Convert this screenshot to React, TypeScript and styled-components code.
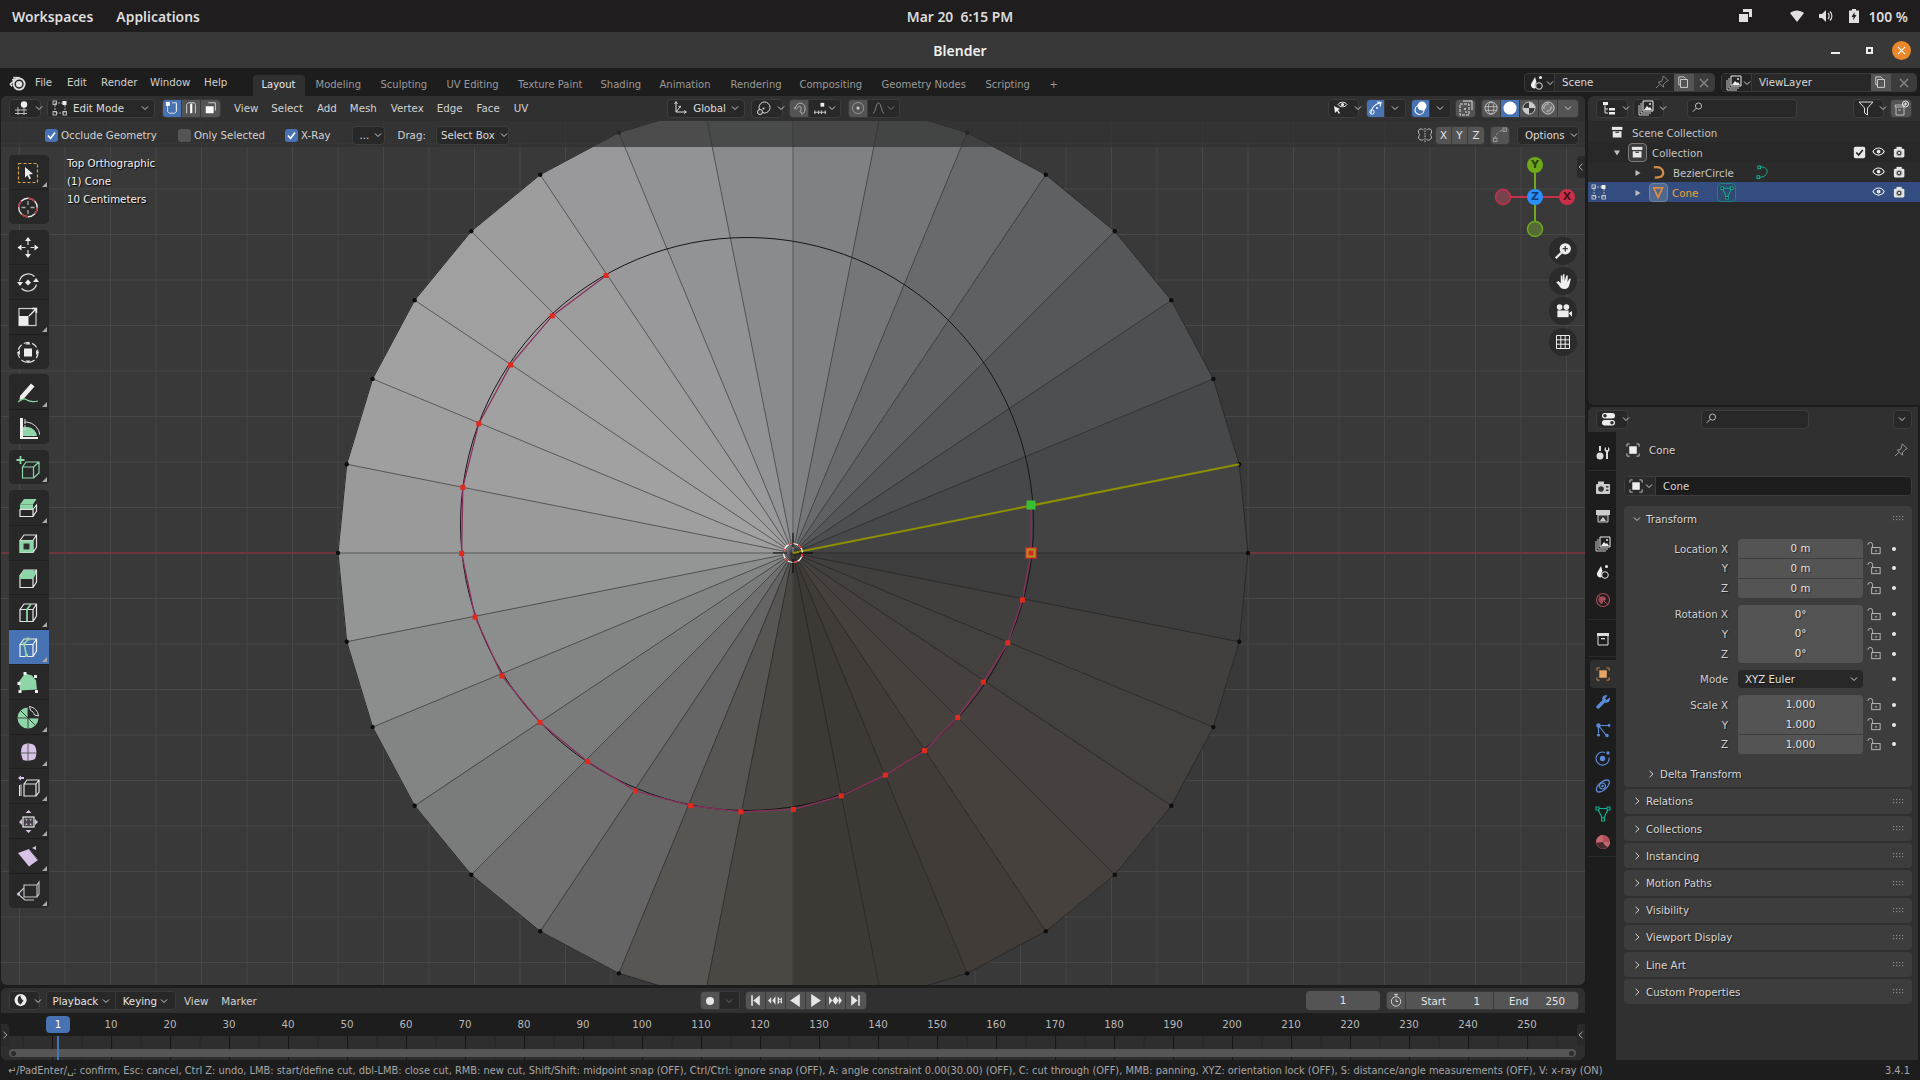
import React from "react";
import styled, { createGlobalStyle } from "styled-components";

const GlobalStyle = createGlobalStyle`
  html, body { margin: 0; padding: 0; background: #1d1d1d; }
  * { box-sizing: border-box; }
  svg { display: block; flex-shrink: 0; }
`;

const UI = `"DejaVu Sans", "Liberation Sans", sans-serif`;
const DESK = `"Noto Sans", "Open Sans", sans-serif`;

/* ---------- shell ---------- */

const Page = styled.div`
  width: 1920px;
  height: 1080px;
  overflow: hidden;
  display: flex;
  flex-direction: column;
  background: #1d1d1d;
  font-family: ${UI};
  font-size: 10.25px;
  color: #d4d4d4;
`;

const DeskBar = styled.div`
  height: 32px;
  background: #1f1d1e;
  display: grid;
  grid-template-columns: 1fr auto 1fr;
  align-items: center;
  padding: 0 12px;
  font-family: ${DESK};
  font-weight: 600;
  font-size: 13.9px;
  color: #dcdcdc;
`;

const DeskLeft = styled.div`
  display: flex;
  gap: 23px;
`;

const DeskRight = styled.div`
  display: flex;
  justify-content: flex-end;
  align-items: center;
`;

const Clock = styled.div`
  white-space: pre;
`;

const TitleBar = styled.div`
  height: 36px;
  background: #383838;
  display: flex;
  align-items: center;
  justify-content: center;
  position: relative;
  font-family: ${DESK};
  font-weight: 600;
  font-size: 14px;
  color: #f0f0f0;
`;

const WindowControls = styled.div`
  position: absolute;
  right: 9px;
  top: 8px;
  display: flex;
  align-items: center;
  height: 20px;
`;

const MinBtn = styled.div`
  width: 9px;
  height: 2px;
  background: #eee;
  margin: 5px 26px 0 0;
`;

const MaxBtn = styled.div`
  width: 7px;
  height: 7px;
  border: 2px solid #eee;
  background: #383838;
  margin-right: 19px;
`;

const CloseBtn = styled.div`
  width: 19px;
  height: 19px;
  border-radius: 50%;
  background: #e9872b;
  display: flex;
  align-items: center;
  justify-content: center;
`;

const TopMenu = styled.div`
  height: 28px;
  background: #1d1d1d;
  display: flex;
  position: relative;
  padding-left: 9px;
`;

const LogoSlot = styled.div`
  width: 26px;
  height: 28px;
  display: flex;
  align-items: center;
  padding-top: 1px;
`;

const TopItem = styled.span<{ $w: number }>`
  width: ${(p) => p.$w}px;
  line-height: 28px;
  color: #d0d0d0;
`;

const WorkTabs = styled.div`
  display: flex;
  align-items: flex-end;
  gap: 2px;
  margin-left: 14.5px;
  font-size: 10px;
`;

const WorkTab = styled.div<{ $active?: boolean; $w: number }>`
  width: ${(p) => p.$w}px;
  height: 21px;
  padding-left: 9px;
  border-radius: 4px 4px 0 0;
  line-height: 20px;
  white-space: nowrap;
  background: ${(p) => (p.$active ? "#303030" : "transparent")};
  color: ${(p) => (p.$active ? "#e6e6e6" : "#9a9a9a")};
`;

const ScenePickers = styled.div`
  margin-left: auto;
  display: flex;
  gap: 6px;
  padding: 5px 3px 0 0;
`;

const Picker = styled.div<{ $w: number }>`
  width: ${(p) => p.$w}px;
  height: 19px;
  display: flex;
  border: 1px solid #3a3a3a;
  border-radius: 4px;
  background: #282828;
  overflow: hidden;
`;

const PickerIcon = styled.div`
  width: 30px;
  display: flex;
  align-items: center;
  gap: 1px;
  padding-left: 4px;
  background: #232323;
  border-right: 1px solid #3a3a3a;
`;

const PickerName = styled.div`
  flex: 1;
  padding-left: 7px;
  line-height: 17px;
  color: #d8d8d8;
  display: flex;
  align-items: center;
  justify-content: space-between;
  padding-right: 4px;
`;

const PickerBtn = styled.div<{ $on?: boolean; $w?: number }>`
  width: ${(p) => p.$w ?? 20}px;
  display: flex;
  align-items: center;
  justify-content: center;
  background: ${(p) => (p.$on ? "#545454" : "#3c3c3c")};
`;

const Workspace = styled.div`
  flex: 1;
  display: grid;
  grid-template-columns: 1588px 332px;
  min-height: 0;
`;

const LeftCol = styled.div`
  display: flex;
  flex-direction: column;
  padding: 0 3px 2px 1px;
  gap: 3px;
`;

const RightCol = styled.div`
  display: flex;
  flex-direction: column;
  gap: 2px;
  padding-bottom: 2px;
`;

const StatusBar = styled.div`
  height: 18px;
  background: #1d1d1d;
  display: flex;
  justify-content: space-between;
  padding: 0 10px 0 8px;
  line-height: 17px;
  font-size: 9.85px;
  color: #a6a6a6;
  white-space: nowrap;
`;

/* ---------- viewport ---------- */

const Viewport = styled.div`
  height: 889px;
  position: relative;
  border-radius: 6px;
  overflow: hidden;
  background: #393939;
`;

const ViewportCanvas = styled.svg`
  position: absolute;
  left: 0;
  top: 0;
`;

const Header = styled.div`
  position: relative;
  height: 25px;
  background: #303030;
  display: flex;
  align-items: center;
  padding: 0 0 1px 8px;
`;

const ToolSettings = styled.div`
  position: relative;
  height: 26px;
  background: rgba(48, 48, 48, 0.72);
  display: flex;
  align-items: center;
  padding-top: 2px;
`;

const Group = styled.div<{ $ml?: number; $w?: number }>`
  display: flex;
  align-items: center;
  margin-left: ${(p) => p.$ml ?? 0}px;
  ${(p) => (p.$w ? `width: ${p.$w}px;` : "")}
`;

const Menu = styled.span<{ $ml: number }>`
  margin-left: ${(p) => p.$ml}px;
  color: #d2d2d2;
  white-space: nowrap;
`;

const Drop = styled.div<{ $w: number; $ml?: number }>`
  width: ${(p) => p.$w}px;
  height: 19px;
  margin-left: ${(p) => p.$ml ?? 0}px;
  display: flex;
  align-items: center;
  gap: 5px;
  padding: 0 5px 0 4px;
  background: #282828;
  border: 1px solid #3d3d3d;
  border-radius: 4px;
  color: #dcdcdc;
  white-space: nowrap;
`;

const Push = styled.div`
  margin-left: auto;
  display: flex;
  align-items: center;
`;

const Segments = styled.div<{ $ml?: number }>`
  height: 19px;
  margin-left: ${(p) => p.$ml ?? 0}px;
  display: flex;
  border-radius: 4px;
  overflow: hidden;
  border: 1px solid #3a3a3a;
`;

const Seg = styled.div<{ $w: number; $on?: boolean; $dim?: boolean }>`
  width: ${(p) => p.$w}px;
  display: flex;
  align-items: center;
  justify-content: center;
  background: ${(p) => (p.$on ? "#4772b3" : p.$dim ? "#282828" : "#545454")};
  border-right: 1px solid #3a3a3a;
  color: #e4e4e4;
  &:last-child {
    border-right: 0;
  }
`;

const Check = styled.div<{ $on?: boolean; $ml: number }>`
  width: 13px;
  height: 13px;
  margin-left: ${(p) => p.$ml}px;
  border-radius: 3px;
  background: ${(p) => (p.$on ? "#4772b3" : "#545454")};
  display: flex;
  align-items: center;
  justify-content: center;
`;

const CheckLabel = styled.span`
  margin-left: 3px;
  color: #d2d2d2;
  white-space: nowrap;
`;

const InfoText = styled.div`
  position: absolute;
  left: 66px;
  top: 58px;
  line-height: 18px;
  color: #f2f2f2;
  text-shadow: 1px 1px 1px #000;
`;

const Toolbar = styled.div`
  position: absolute;
  left: 8px;
  top: 58.5px;
  width: 40px;
  display: flex;
  flex-direction: column;
  gap: 5.6px;
`;

const ToolGroup = styled.div`
  border-radius: 5px;
  overflow: hidden;
  background: #282828;
`;

const ToolBtn = styled.div<{ $on?: boolean; $more?: boolean }>`
  height: 34.8px;
  position: relative;
  display: flex;
  align-items: center;
  justify-content: center;
  padding-right: 2px;
  background: ${(p) => (p.$on ? "#4772b3" : "#282828")};
  & + & {
    border-top: 1px solid #1f1f1f;
  }
  ${(p) =>
    p.$more
      ? `&:after { content: ""; position: absolute; right: 2px; bottom: 2px; border-style: solid; border-width: 0 0 5px 5px; border-color: transparent transparent #a8a8a8 transparent; }`
      : ""}
`;

const Gizmo = styled.svg`
  position: absolute;
  left: 1489px;
  top: 56px;
`;

const GizmoBall = styled.div<{ $x: number; $y: number; $c: string; $ink: string }>`
  position: absolute;
  left: ${(p) => p.$x - 8}px;
  top: ${(p) => p.$y - 8}px;
  width: 16px;
  height: 16px;
  border-radius: 50%;
  background: ${(p) => p.$c};
  color: ${(p) => p.$ink};
  text-align: center;
  line-height: 16px;
  font-weight: 700;
  font-size: 11px;
`;

const NavColumn = styled.div`
  position: absolute;
  left: 1548px;
  top: 141px;
  display: flex;
  flex-direction: column;
  gap: 2.2px;
`;

const NavBtn = styled.div`
  width: 28px;
  height: 28px;
  border-radius: 50%;
  background: #2b2b2b;
  display: flex;
  align-items: center;
  justify-content: center;
`;

const EdgeTab = styled.div<{ $top: number; $left?: boolean }>`
  position: absolute;
  ${(p) => (p.$left ? "left: 0;" : "right: 0;")}
  top: ${(p) => p.$top}px;
  width: 8px;
  height: 22px;
  display: flex;
  align-items: center;
  justify-content: center;
  background: #2a2a2a;
  border-radius: ${(p) => (p.$left ? "0 3px 3px 0" : "3px 0 0 3px")};
`;

/* ---------- timeline ---------- */

const Timeline = styled.div`
  flex: 1;
  position: relative;
  border-radius: 6px;
  overflow: hidden;
  background: #333;
  display: flex;
  flex-direction: column;
`;

const TimeHeader = styled.div`
  height: 25px;
  background: #303030;
  display: flex;
  align-items: center;
  padding-left: 8px;
  flex-shrink: 0;
`;

const Ruler = styled.div`
  height: 23px;
  position: relative;
  background: #1d1d1d;
`;

const FrameNo = styled.span`
  position: absolute;
  top: 5px;
  transform: translateX(-50%);
  color: #b8b8b8;
  font-size: 10.25px;
`;

const Playhead = styled.div`
  position: absolute;
  left: 45px;
  top: 3px;
  width: 24px;
  height: 17px;
  background: #4772b3;
  border-radius: 4px;
  color: #fff;
  text-align: center;
  line-height: 17px;
`;

const PlayLine = styled.div`
  position: absolute;
  left: 56px;
  top: 48px;
  width: 2px;
  height: 26px;
  background: #4772b3;
`;

const Tracks = styled.div`
  flex: 1;
  position: relative;
  background-color: #2e2e2e;
  padding-top: 13px;
`;

const TickLayer = styled.div<{ $color: string; $offset: number; $step: number }>`
  position: absolute;
  inset: 0;
  background-image: linear-gradient(90deg, ${(p) => p.$color} 1px, transparent 1px);
  background-size: ${(p) => p.$step}px 100%;
  background-position: ${(p) => p.$offset}px 0;
`;

const ScrollBar = styled.div`
  position: relative;
  height: 8px;
  margin: 0 9px 0 8px;
  border-radius: 4px;
  background: #565656;
  display: flex;
  justify-content: space-between;
  align-items: center;
  padding: 0 2px;
`;

const ScrollEnd = styled.div`
  width: 5px;
  height: 5px;
  border-radius: 50%;
  background: #2c2c2c;
`;

const NumField = styled.div<{ $w: number; $ml?: number }>`
  width: ${(p) => p.$w}px;
  height: 19px;
  margin-left: ${(p) => p.$ml ?? 0}px;
  background: #545454;
  border-radius: 4px;
  text-align: center;
  line-height: 19px;
  color: #e4e4e4;
`;

const RangeSeg = styled(Seg)`
  justify-content: space-between;
  padding: 0 13px 0 15px;
`;

/* ---------- outliner ---------- */

const Outliner = styled.div`
  height: 309px;
  border-radius: 6px 0 0 6px;
  overflow: hidden;
  background: #282828;
`;

const SearchBox = styled.div<{ $w: number; $ml: number }>`
  width: ${(p) => p.$w}px;
  height: 19px;
  margin-left: ${(p) => p.$ml}px;
  background: #282828;
  border: 1px solid #3d3d3d;
  border-radius: 4px;
  display: flex;
  align-items: center;
  padding-left: 4px;
`;

const Rows = styled.div`
  padding-top: 1px;
`;

const Row = styled.div<{ $sel?: boolean; $alt?: boolean; $pad: number }>`
  height: 20px;
  position: relative;
  display: flex;
  align-items: center;
  padding: 1px 0 0 ${(p) => p.$pad}px;
  gap: 4px;
  background: ${(p) => (p.$sel ? "#334d80" : p.$alt ? "#2b2b2b" : "transparent")};
  color: #c4c4c4;
`;

const RowName = styled.span<{ $orange?: boolean }>`
  color: ${(p) => (p.$orange ? "#f0a030" : "#c4c4c4")};
`;

const RowEnd = styled.div`
  margin-left: auto;
  display: flex;
  gap: 6px;
  padding-right: 13px;
  align-items: center;
`;

const ModeMark = styled.div`
  position: absolute;
  left: 3px;
  top: 2px;
`;

const chipTones: Record<string, [string, string]> = {
  plain: ["#3c3c3c", "#7c7c7c"],
  sel: ["#4f6890", "#6f82a0"],
  teal: ["#2f4a6e", "#1f7f7a"],
};

const IconChip = styled.div<{ $tone: string }>`
  width: 19px;
  height: 19px;
  border-radius: 4px;
  background: ${(p) => chipTones[p.$tone][0]};
  border: 1px solid ${(p) => chipTones[p.$tone][1]};
  display: flex;
  align-items: center;
  justify-content: center;
`;

/* ---------- properties ---------- */

const Properties = styled.div`
  flex: 1;
  border-radius: 6px 0 0 6px;
  margin-right: 2px;
  overflow: hidden;
  background: #303030;
  display: flex;
  flex-direction: column;
`;

const PropBody = styled.div`
  flex: 1;
  display: flex;
  min-height: 0;
`;

const TabColumn = styled.div`
  width: 28px;
  background: #1d1d1d;
  padding-top: 7px;
`;

const TabItem = styled.div<{ $on?: boolean }>`
  width: 26px;
  height: 28px;
  margin-left: 2px;
  display: flex;
  align-items: center;
  justify-content: center;
  border-radius: 4px 0 0 4px;
  background: ${(p) => (p.$on ? "#303030" : "transparent")};
`;

const TabSep = styled.div<{ $m: number }>`
  height: 1px;
  margin: ${(p) => p.$m}px 0;
  background: #2a2a2a;
`;

const Context = styled.div`
  flex: 1;
  padding: 0 6px 0 8px;
  text-shadow: 1px 1px 1px rgba(0, 0, 0, 0.5);
`;

const ContextRow = styled.div`
  height: 36px;
  display: flex;
  align-items: center;
  padding: 0 3px 0 2px;
  gap: 8px;
`;

const PinSlot = styled.div`
  margin-left: auto;
`;

const NameField = styled.div`
  height: 20px;
  margin: 8px 0 10px;
  display: flex;
  border: 1px solid #3d3d3d;
  border-radius: 4px;
  background: #1d1d1d;
`;

const NameIcon = styled.div`
  width: 31px;
  display: flex;
  align-items: center;
  gap: 1px;
  padding-left: 4px;
  background: #2a2a2a;
  border-right: 1px solid #3d3d3d;
  border-radius: 4px 0 0 4px;
`;

const NameText = styled.div`
  padding-left: 7px;
  line-height: 18px;
  color: #d8d8d8;
`;

const Panel = styled.div`
  background: #3d3d3d;
  border-radius: 4px;
  margin-bottom: 2px;
`;

const PanelHead = styled.div<{ $h?: number }>`
  height: ${(p) => p.$h ?? 25.2}px;
  display: flex;
  align-items: center;
  padding: 0 8px 0 9px;
  gap: 5px;
  color: #d6d6d6;
`;

const Grip = styled.div`
  margin-left: auto;
`;

const FieldStack = styled.div`
  display: flex;
  flex-direction: column;
  gap: 7px;
  padding-top: 8px;
`;

const FieldBlock = styled.div`
  display: flex;
  flex-direction: column;
  gap: 0.5px;
`;

const FieldRow = styled.div<{ $h?: number }>`
  display: grid;
  grid-template-columns: 104px 135px 29px 1fr;
  height: ${(p) => p.$h ?? 19.2}px;
  align-items: center;
`;

const FieldLabel = styled.div`
  text-align: right;
  color: #cfcfcf;
`;

const Value = styled.div<{ $top?: boolean; $bottom?: boolean }>`
  margin-left: 10px;
  width: 125px;
  height: 100%;
  line-height: 19px;
  text-align: center;
  background: #545454;
  color: #e2e2e2;
  border-radius: ${(p) => (p.$top ? "4px 4px " : "0 0 ")}${(p) => (p.$bottom ? "4px 4px" : "0 0")};
`;

const Select = styled.div`
  margin-left: 10px;
  width: 125px;
  height: 18px;
  background: #282828;
  border-radius: 4px;
  display: flex;
  align-items: center;
  justify-content: space-between;
  padding: 0 5px 0 7px;
  color: #e0e0e0;
`;

const LockSlot = styled.div`
  margin-left: 4px;
`;

const Dot = styled.div`
  width: 4px;
  height: 4px;
  border-radius: 50%;
  background: #e8e8e8;
  justify-self: start;
`;

const DeltaRow = styled.div`
  display: flex;
  align-items: center;
  gap: 5px;
  padding-left: 23px;
  height: 25px;
  margin-top: 8px;
  color: #d6d6d6;
`;

/* ---------- icons ---------- */

const Chev = ({ c = "#cfcfcf", s = 8, dir = "down" }: { c?: string; s?: number; dir?: string }) => (
  <svg width={s} height={s} viewBox="0 0 8 8" fill="none" stroke={c} strokeWidth="1">
    {dir === "down" && <path d="M1 2.5 4 5.5 7 2.5" />}
    {dir === "right" && <path d="M2.5 .8 6 4 2.5 7.2" />}
    {dir === "left" && <path d="M5.5 .8 2 4 5.5 7.2" />}
  </svg>
);

const I = ({ s = 16, v = 16, children }: { s?: number; v?: number; children: React.ReactNode }) => (
  <svg width={s} height={s} viewBox={`0 0 ${v} ${v}`} fill="none">
    {children}
  </svg>
);

const Chk = () => (
  <svg width="11" height="11" viewBox="0 0 11 11" fill="none">
    <path d="M2 5.5 4.500 8.500 9 2.500" stroke="#fff" strokeWidth="1.600" />
  </svg>
);

const W = "#e4e4e4";
const G = "#8ed6a8";
const P = "#d8c2e8";

const Cube = ({ c = W }: { c?: string }) => (
  <path d="M4 9.500h13v12H4zM4 9.500 8 4h12.500v12L17 21.500M17 9.500 20.500 4" stroke={c} strokeWidth="1.200" />
);

const toolIcons: Record<string, React.ReactNode> = {
  select: (
    <>
      <rect x="2.500" y="3.500" width="19" height="19" stroke="#d8a548" strokeWidth="1.200" strokeDasharray="3 2" />
      <path d="M9 7l8 7-4 .4 2 4-1.600.8-2-4-2.400 2.600z" fill="#eee" />
    </>
  ),
  cursor: (
    <>
      <circle cx="12" cy="12.500" r="9.300" stroke="#e6e6e6" strokeWidth="1.400" />
      <circle cx="12" cy="12.500" r="9.300" stroke="#b03038" strokeWidth="1.400" strokeDasharray="7 7.600" />
      <path d="M12 6v4M12 15v4M5.500 12.500h4M14.500 12.500h4" stroke="#aaa" strokeWidth="1.300" />
    </>
  ),
  move: (
    <>
      <path d="M12 2l3 4h-6zM12 23l3-4H9zM1.500 12.500l4-3v6zM22.500 12.500l-4-3v6z" fill="#eee" />
      <path d="M12 6v4M12 15v4M5.500 12.500h4M14.500 12.500h4" stroke="#ddd" strokeWidth="1.200" />
    </>
  ),
  rotate: (
    <>
      <path d="M3.500 11a9 9 0 0 1 15-4.500M20.500 14.500a9 9 0 0 1-15 4" stroke="#ddd" strokeWidth="1.200" />
      <path d="M12 9.500l3 3-3 3-3-3zM1 12h6l-3 4zM17 12h6l-3-4z" fill="#e8e8e8" />
    </>
  ),
  scale: (
    <>
      <rect x="3" y="3.500" width="17" height="17" stroke="#ccc" strokeWidth="1.200" />
      <rect x="3" y="11" width="9.500" height="9.500" fill="#eee" />
      <path d="M13 11l7-7M16 3.500h4.500V8" stroke="#eee" strokeWidth="1.400" />
    </>
  ),
  transform: (
    <>
      <circle cx="12" cy="12.500" r="10" stroke="#ddd" strokeWidth="1.200" strokeDasharray="6 2.500" />
      <rect x="8" y="8.500" width="8" height="8" fill="#eee" />
      <path d="M12 1.500l2.500 3h-5zM12 23.500l2.500-3h-5zM1 12.500l3-2.500v5zM23 12.500l-3-2.500v5z" fill="#ddd" />
    </>
  ),
  annotate: (
    <>
      <path d="M4 16 15 3.500l3.500 3L7.500 19 3.500 20z" fill="#eee" />
      <path d="M2 22c4-3 6-4 9-2s6 2 11 1" stroke={G} strokeWidth="1.200" />
    </>
  ),
  measure: (
    <>
      <path d="M7 12h5a11 11 0 0 1 9 9H7z" fill={G} />
      <path d="M4 3h3v19H22v2H4z" fill="#eee" />
      <path d="M8 5h2M8 8h2M8 11h2M8 14h2M11 21v-1M14 21v-1M17 21v-1" stroke="#ddd" strokeWidth="1" />
      <path d="M8 7h3a15 15 0 0 1 13 13" stroke="#ddd" strokeWidth="1" />
    </>
  ),
  add: (
    <>
      <path d="M6.500 12h11v11h-11zM6.500 12 10 7h13v11l-5.500 5M17.500 12 23 7" stroke={G} strokeWidth="1.200" />
      <path d="M4.500 1v8M.5 5h8" stroke={G} strokeWidth="1.800" />
    </>
  ),
  extrude: (
    <>
      <path d="M4 9.500 8 4h12.500L17 9.500z" fill={G} />
      <path d="M4 9.500h13v5H4z" fill={G} />
      <path d="M4 14.500h13v7H4zM17 14.500 20.500 10v6L17 21.500" stroke={W} strokeWidth="1.200" />
    </>
  ),
  inset: (
    <>
      <Cube />
      <path d="M4 9.500h13v12H4z" fill={G} />
      <rect x="8" y="13" width="5" height="5" fill="#282828" stroke="#333" />
    </>
  ),
  bevel: (
    <>
      <Cube />
      <path d="M4 9.500 8 4h9l3.500 3-3.500 6H4z" fill={G} />
    </>
  ),
  loop: (
    <>
      <Cube />
      <path d="M11 9.500v12M11 9.500 15 4" stroke={G} strokeWidth="1.800" />
    </>
  ),
  knife: (
    <>
      <path d="M4 9.500h13v12H4zM4 9.500 8 4h12.500v12L17 21.500M17 9.500 20.500 4" stroke="#eee" strokeWidth="1.200" />
      <path d="M8 9 10.500 20.500M8 9l4.500-5" stroke={G} strokeWidth="1.600" />
      <path d="M10.500 2.500h3v3h-3zM6.500 7.500h3v3h-3zM9 19h3v3H9z" fill={G} />
    </>
  ),
  poly: (
    <>
      <path d="M9 3.500l7 2 4 5 1 9-17 1-1-9z" fill={G} />
      <path d="M7.500 2h3v3h-3zM18 5h3v3h-3zM1.500 12h3v3h-3zM2.500 20h3v3h-3zM19 20h3v3h-3z" fill="#eee" />
    </>
  ),
  spin: (
    <>
      <path d="M12 13V2.500A10.500 10.500 0 1 0 22.500 13z" fill={G} />
      <path d="M12 2.500v21M1.500 13h21M4.500 5.500l15 15" stroke="#282828" strokeWidth=".8" />
      <path d="M13.500 1.500c5 1 8.500 4.500 9 9.500l-4-1c-.5-2-2-4-4-4.500z" stroke="#ddd" strokeWidth="1" />
    </>
  ),
  smooth: (
    <>
      <path d="M7 5c4-2 9-2 12 1 2 4 2 9 0 13-4 2-9 2-12 1-2-4-3-11 0-15z" fill={P} />
      <path d="M4 13h17M12 4v17" stroke="#555" strokeWidth=".9" />
    </>
  ),
  edgeslide: (
    <>
      <path d="M8 10h12v12H8zM8 10l3-4h12v12l-3 4M20 10l3-4" stroke={W} strokeWidth="1.200" />
      <path d="M5 10.500V22M3.500 11v11" stroke={W} strokeWidth="1" />
      <path d="M5 1.500l-3 2.500 3 2.500v-1.500h3v-2H5z" fill={P} />
    </>
  ),
  shrink: (
    <>
      <rect x="7" y="8" width="11" height="10" stroke={W} strokeWidth="1.200" fill="#444" />
      <path d="M12.500 1l3 3h-6zM12.500 24l3-3h-6zM3 13l3-3v6zM22 13l-3-3v6z" fill={P} />
      <path d="M9 9.500l2.500 1-1 1.500zM16 9.500l-2.500 1 1 1.500zM9 16.500l2.500-1-1-1.500zM16 16.500l-2.500-1 1-1.500z" fill={P} />
    </>
  ),
  shear: (
    <>
      <path d="M2 9l11-4 9 11-9 6.500z" fill={P} />
      <path d="M13 5l9 11" stroke="#555" />
      <path d="M20 2l-4 2 4 2z" fill={P} />
    </>
  ),
  tosphere: (
    <>
      <path d="M8 6h13v12H8zM21 6l2-3v12l-2 3" stroke="#c8c8c8" strokeWidth="1.100" />
      <path d="M2 15l6-6M2 15l7 6h9" stroke="#c8c8c8" strokeWidth="1.100" />
      <circle cx="2.500" cy="15" r="1.500" fill={P} />
    </>
  ),
};

const toolGroups: { id: string; more?: boolean; on?: boolean }[][] = [
  [{ id: "select", more: true }, { id: "cursor" }],
  [{ id: "move" }, { id: "rotate" }, { id: "scale", more: true }, { id: "transform" }],
  [{ id: "annotate", more: true }, { id: "measure" }],
  [{ id: "add", more: true }],
  [
    { id: "extrude", more: true },
    { id: "inset" },
    { id: "bevel" },
    { id: "loop", more: true },
    { id: "knife", more: true, on: true },
    { id: "poly" },
    { id: "spin", more: true },
    { id: "smooth", more: true },
    { id: "edgeslide", more: true },
    { id: "shrink", more: true },
    { id: "shear", more: true },
    { id: "tosphere", more: true },
  ],
];

const Logo = () => (
  <I s={17}>
    <circle cx="9.500" cy="9.500" r="3" fill="#ddd" />
    <circle cx="9.500" cy="9.500" r="5.200" stroke="#ddd" strokeWidth="1.800" />
    <path d="M1 9.500 7 5 3 5.500M3 11.500 1 9.500" stroke="#ddd" strokeWidth="1.500" />
    <path d="M4 3.500h6" stroke="#ddd" strokeWidth="1.600" />
  </I>
);

const ViewIcon = () => (
  <I>
    <path d="M1 10h12M1 13.500h12M4 7v8M10 7v8" stroke="#ccc" strokeWidth=".9" />
    <circle cx="10" cy="4.500" r="3.200" fill="#eee" />
  </I>
);
const ModeIcon = () => (
  <I>
    <path d="M3 3h10v10H3z" stroke="#bbb" strokeWidth=".9" strokeDasharray="2 1" />
    <rect x="1" y="1" width="3.500" height="3.500" stroke="#ccc" strokeWidth=".9" />
    <rect x="10.500" y="1" width="4" height="4" fill="#eee" />
    <rect x="1" y="11.500" width="3.500" height="3.500" stroke="#ccc" strokeWidth=".9" />
    <rect x="11" y="11.500" width="3.500" height="3.500" stroke="#ccc" strokeWidth=".9" />
  </I>
);
const VertMode = () => (
  <I s={14}>
    <path d="M3 3v9l2 2h6l2-2V3" stroke="#eee" strokeWidth="1" />
    <path d="M8 2h5v10" stroke="#eee" strokeWidth="1" />
    <rect x="1" y="1" width="4.500" height="4.500" fill="#fff" />
  </I>
);
const EdgeMode = () => (
  <I s={14}>
    <path d="M3 14V4l2-2h7l1 2v10" stroke="#ddd" strokeWidth="1" />
    <rect x="7" y="3" width="2.500" height="11" fill="#fff" />
  </I>
);
const FaceMode = () => (
  <I s={14}>
    <path d="M5 2h8v9" stroke="#ddd" strokeWidth="1" />
    <path d="M2 6h9v8H2z" fill="#fff" />
  </I>
);
const GlobalIcon = () => (
  <I>
    <path d="M4 12V2M4 12h10M4 12l4-5" stroke="#ddd" strokeWidth="1" />
    <path d="M2.500 4 4 1.500 5.500 4M12 10.500l2.500 1.500-2.500 1.500M6.500 6.500l2-.5-.5 2" stroke="#ddd" strokeWidth=".9" />
  </I>
);
const PivotIcon = () => (
  <I>
    <circle cx="8.500" cy="7.500" r="5.500" stroke="#ddd" strokeWidth="1" />
    <circle cx="4" cy="12" r="2.500" fill="#303030" stroke="#ddd" />
    <circle cx="7.500" cy="8.500" r="1" fill="#ddd" />
  </I>
);
const MagnetIcon = () => (
  <I s={15}>
    <path d="M3 8l3-5c3-2 8 0 8 5s-3 6-4 6M6 8c0-2 2-3 3-2s1 3 0 5" stroke="#bbb" strokeWidth="1" />
    <path d="M2 7l3 2M8 11l3 2" stroke="#bbb" strokeWidth="1" />
  </I>
);
const SnapIcon = () => (
  <I s={15}>
    <path d="M1 12h13M2 10v4M6 10v4M9 10v4M13 10v4" stroke="#ddd" strokeWidth=".9" />
    <rect x="8" y="2" width="4" height="4" fill="#eee" />
  </I>
);
const PropIcon = () => (
  <I s={15}>
    <circle cx="7.500" cy="7.500" r="6" stroke="#999" strokeWidth="1" />
    <circle cx="7.500" cy="7.500" r="1.700" fill="#ccc" />
  </I>
);
const FalloffIcon = () => (
  <I s={15}>
    <path d="M1 13c3 0 3-11 6-11s3 11 6 11" stroke="#8a8a8a" strokeWidth="1" />
  </I>
);
const EyeArrow = () => (
  <I>
    <path d="M1 6l6 3-2 1 2 3-1 1-2-3-2 2z" fill="#eee" />
    <path d="M5 4.500c2-3 7-3 9 0-2 3-7 3-9 0z" stroke="#eee" strokeWidth="1" />
    <circle cx="9.500" cy="4.500" r="1.500" fill="#eee" />
  </I>
);
const GizmoIcon = () => (
  <I>
    <path d="M3 13C3 8 7 4 12 3M9 2l4 .5-1 4" stroke="#fff" strokeWidth="1.100" />
    <circle cx="4" cy="12" r="2.200" stroke="#fff" />
    <circle cx="9" cy="8" r="1" fill="#fff" />
  </I>
);
const OverlayIcon = () => (
  <I>
    <circle cx="9" cy="6" r="4.500" fill="#fff" />
    <circle cx="6.500" cy="10" r="4.500" stroke="#fff" strokeWidth="1.100" fill="none" />
  </I>
);
const XrayIcon = () => (
  <I>
    <path d="M5 1h9v9" stroke="#ddd" strokeWidth="1" />
    <path d="M2 4h9v11H2z" stroke="#ddd" strokeWidth="1" strokeDasharray="3 1" />
    <circle cx="7" cy="9" r=".9" fill="#ddd" />
    <path d="M7 12h2" stroke="#ddd" />
  </I>
);
const ShadeWire = () => (
  <I s={15}>
    <circle cx="7.500" cy="7.500" r="6.500" stroke="#ccc" />
    <ellipse cx="7.500" cy="7.500" rx="3" ry="6.500" stroke="#ccc" strokeWidth=".8" />
    <path d="M1 6h13M1.500 10h12" stroke="#ccc" strokeWidth=".8" />
  </I>
);
const ShadeSolid = () => (
  <I s={15}>
    <circle cx="7.500" cy="7.500" r="7" fill="#fff" />
  </I>
);
const ShadeMat = () => (
  <I s={15}>
    <circle cx="7.500" cy="7.500" r="6.500" stroke="#ccc" fill="#3a3a3a" />
    <path d="M7.500 1a6.500 6.500 0 0 1 6.500 6.500H7.500zM7.500 7.500v6.500a6.500 6.500 0 0 1-6.500-6.500z" fill="#ccc" />
  </I>
);
const ShadeRender = () => (
  <I s={15}>
    <circle cx="7.500" cy="7.500" r="6.500" stroke="#ccc" fill="#777" />
    <path d="M3 8c0-3 2-5 5-5M6 11c3 0 5-2 5-5" stroke="#ccc" strokeWidth="1" />
  </I>
);
const MirrorIcon = () => (
  <I>
    <path d="M8 1v14" stroke="#ccc" strokeDasharray="1.500 1" />
    <path d="M6.500 3C4 1 1 2 1.500 5s1 2 1 3-1.500 1.500-1 3 3 3 5 1.500M9.500 3c2.500-2 5.500-1 5 2s-1 2-1 3 1.500 1.500 1 3-3 3-5 1.500" stroke="#ccc" strokeWidth=".9" />
  </I>
);
const AutoMergeIcon = () => (
  <I>
    <path d="M3 12c0-5 5-9 10-9" stroke="#999" strokeWidth="1" strokeDasharray="3 1.500" />
    <rect x="11" y="1" width="3.500" height="3.500" stroke="#999" />
    <rect x="1.500" y="11" width="3.500" height="3.500" stroke="#999" />
  </I>
);

const Search = () => (
  <I s={13}>
    <circle cx="8" cy="5" r="3.800" stroke="#ccc" strokeWidth="1.100" />
    <path d="M5.200 7.800 1 12" stroke="#ccc" strokeWidth="1.200" />
  </I>
);
const ListIcon = () => (
  <I>
    <path d="M2 2h5v3H2z" fill="#eee" />
    <path d="M4 5v8h3M4 9h3" stroke="#ddd" />
    <path d="M8 8h6v2.500H8zM8 12h6v2.500H8z" fill="#eee" />
  </I>
);
const LayersIcon = () => (
  <I>
    <path d="M5 1h10v10H5z" stroke="#eee" strokeWidth="1" />
    <path d="M3 3v10h10M1 5v10h10" stroke="#ccc" strokeWidth="1" />
    <path d="M6 10l3-4 2 2 1-1 2 3z" fill="#eee" />
    <circle cx="12" cy="4" r="1" fill="#eee" />
  </I>
);
const SceneIcon = () => (
  <I>
    <path d="M6 2 2 9a3.500 3.500 0 0 0 5 4c-1-2-.5-5 .5-6z" fill="#eee" />
    <circle cx="11.500" cy="2.500" r="1.500" fill="#eee" />
    <circle cx="10" cy="11" r="3.300" stroke="#ddd" strokeWidth="1" />
  </I>
);
const Pin = ({ c = "#8a8a8a" }: { c?: string }) => (
  <I s={15}>
    <path d="M9 1l5 5-2 1-3 3v3L3.500 7.500 7 7l1-3zM5 10l-4 4" stroke={c} strokeWidth="1" />
  </I>
);
const Copy = () => (
  <I s={14}>
    <path d="M4 4h8v9H4zM4 10H2V1h6l2 2" stroke="#ddd" strokeWidth="1" />
  </I>
);
const XMark = ({ c = "#8a8a8a", s = 10 }: { c?: string; s?: number }) => (
  <svg width={s} height={s} viewBox="0 0 10 10">
    <path d="M1 1l8 8M9 1 1 9" stroke={c} strokeWidth="1.300" />
  </svg>
);
const FilterIcon = () => (
  <I>
    <path d="M1 2h14L9.500 8v7l-3-2V8z" stroke="#ddd" strokeWidth="1" />
  </I>
);
const NewColl = () => (
  <I>
    <path d="M2 5h9v2H2zM3 7v8h8V7M5 10h3" stroke="#bbb" />
    <circle cx="12.500" cy="4" r="3" stroke="#eee" />
    <path d="M12.500 2.500v3M11 4h3" stroke="#eee" />
  </I>
);
const CollIcon = ({ c = "#e8e8e8" }: { c?: string }) => (
  <I s={14}>
    <rect x="1" y="1" width="12" height="3.500" fill={c} />
    <path d="M2 6h10v7H2z" fill={c} />
    <rect x="5" y="6.500" width="4" height="1.300" fill="#282828" />
  </I>
);
const Tri = () => (
  <svg width="8" height="8" viewBox="0 0 8 8">
    <path d="M1.500 1 6.500 4 1.500 7z" fill="#c0c0c0" />
  </svg>
);
const TriDown = () => (
  <svg width="8" height="8" viewBox="0 0 8 8">
    <path d="M1 1.500h6L4 6.500z" fill="#c0c0c0" />
  </svg>
);
const Eye = () => (
  <I s={15}>
    <path d="M1 7c3-5 9-5 12 0-3 5-9 5-12 0z" stroke="#e8e8e8" strokeWidth="1.200" />
    <circle cx="7" cy="7" r="2" fill="#e8e8e8" />
  </I>
);
const Cam = () => (
  <I s={14}>
    <rect x="1" y="3" width="12" height="10" rx="1.500" fill="#e4e4e4" />
    <rect x="4" y="1" width="6" height="3" fill="#e4e4e4" />
    <circle cx="7" cy="8" r="3" fill="#333" stroke="#aaa" />
    <circle cx="7" cy="8" r="1.300" fill="#e4e4e4" />
  </I>
);
const CurveIcon = () => (
  <I s={15}>
    <path d="M3 2.500c7-1 10 2 10 6s-4 5-9 5" stroke="#d08a4a" strokeWidth="2.400" />
  </I>
);
const CurveData = () => (
  <I s={15}>
    <path d="M5 2c6 0 8 2 8 5s-3 6-8 6" stroke="#10b5a0" strokeWidth="1" />
    <rect x="3" y="1" width="3" height="3" stroke="#10b5a0" />
    <rect x="2" y="11.500" width="3" height="3" stroke="#10b5a0" />
  </I>
);
const ConeIcon = () => (
  <I s={14}>
    <path d="M2 2h10L7 13z" stroke="#e28a3c" strokeWidth="2" />
  </I>
);
const MeshData = ({ s = 14 }: { s?: number }) => (
  <I s={s}>
    <path d="M2.500 2.500h11L8 13.500z" stroke="#0fb394" strokeWidth="1.100" />
    <rect x="1" y="1" width="3" height="3" stroke="#0fb394" fill="#1d1d1d" />
    <rect x="12" y="1" width="3" height="3" stroke="#0fb394" fill="#1d1d1d" />
    <rect x="6.500" y="12" width="3" height="3" stroke="#0fb394" fill="#1d1d1d" />
  </I>
);
const ObjIcon = ({ fill = "#eee", edge = "#c0c0c0" }: { fill?: string; edge?: string }) => (
  <I s={15}>
    <path d="M1 4V1h3M11 1h3v3M1 11v3h3M14 11v3h-3" stroke={edge} strokeWidth="1" />
    <rect x="3.500" y="3.500" width="8" height="8" fill={fill} />
  </I>
);
const LockOpen = () => (
  <I s={15}>
    <rect x="5" y="7" width="9" height="6.500" stroke="#bbb" strokeWidth="1" />
    <path d="M1 4a2.500 2.500 0 0 1 5 0v3" stroke="#bbb" strokeWidth="1" />
    <rect x="9" y="9.500" width="1.200" height="2" fill="#bbb" />
  </I>
);
const GripDots = () => (
  <svg width="11" height="5" viewBox="0 0 11 5">
    {[0, 3, 6, 9].flatMap((x) =>
      [0, 3].map((y) => <rect key={`${x}${y}`} x={x} y={y} width="1.200" height="1.200" fill="#8a8a8a" />)
    )}
  </svg>
);
const Play = ({ d }: { d: string }) => (
  <I s={15} v={14}>
    <path d={d} fill="#e6e6e6" />
  </I>
);
const TimerIcon = () => (
  <I s={15}>
    <circle cx="7.500" cy="9" r="5" stroke="#ddd" />
    <path d="M5.500 1.500h4M7.500 1.500V4M7.500 6.500V9H10" stroke="#ddd" />
  </I>
);
const TimelineIcon = () => (
  <I s={15}>
    <circle cx="7" cy="7.500" r="6.500" fill="#eee" />
    <path d="M7 2.500a5 5 0 0 0-3 5c0 2 1 4 3 5 1-2 3-3 3-5-2 0-3-3-3-5z" fill="#303030" />
  </I>
);
const PropsEditorIcon = () => (
  <I>
    <rect x="1" y="2" width="13" height="5.500" rx="2.700" fill="#eee" />
    <circle cx="4" cy="4.700" r="1.800" fill="#303030" />
    <rect x="1" y="9" width="13" height="5.500" rx="2.700" fill="#eee" />
    <circle cx="11" cy="11.700" r="1.800" fill="#303030" />
  </I>
);
const ToolTab = () => (
  <I>
    <path d="M11 2c-2 1-2 4 0 5v7h2V7c2-1 2-4 0-5v3h-2z" fill="#ddd" />
    <path d="M4 1h2v5H4z" fill="#ddd" />
    <circle cx="5" cy="11" r="3.500" fill="#ddd" />
  </I>
);
const RenderTab = () => (
  <I>
    <rect x="1" y="4" width="14" height="10" rx="1" fill="#ccc" />
    <path d="M3 1.500h6v3H3z" fill="#ccc" />
    <circle cx="6" cy="9" r="2.800" fill="#333" />
    <rect x="11" y="6" width="2.500" height="1.500" fill="#333" />
    <rect x="11" y="9.500" width="2.500" height="1.500" fill="#333" />
  </I>
);
const OutputTab = () => (
  <I>
    <rect x="1" y="2" width="14" height="5" fill="#ccc" />
    <path d="M3 7h10v7H3z" fill="#333" stroke="#ccc" />
    <path d="M5 13l3-4 3 4z" fill="#ccc" />
  </I>
);
const WorldTab = () => (
  <I>
    <circle cx="8" cy="8" r="6.500" stroke="#a44a55" strokeWidth="1.200" />
    <path d="M3 3l10 10" stroke="#a44a55" />
    <path d="M5 5c3-2 6 0 6 2s-3 1-3 3-2 3-3 1-3-4 0-6z" fill="#a44a55" />
  </I>
);
const CollTab = () => (
  <I>
    <rect x="2" y="2" width="12" height="3" fill="#ddd" />
    <path d="M3 5v9h10V5" stroke="#ddd" />
    <rect x="6" y="7" width="4" height="1.300" fill="#ddd" />
  </I>
);
const Wrench = () => (
  <I>
    <path d="M14.500 3.500 11.500 6 10 4.500l2.500-3c-3-1-6 1-5 4.500L1.500 12c-1 1.500 1 3.500 2.500 2.500L10 8.500c3.500 1 6-2 4.500-5z" fill="#5a8ad8" />
  </I>
);
const ParticleTab = () => (
  <I>
    <path d="M3.500 3.500 11 13M3.500 3.500V11M3.500 3.500H13" stroke="#5a8ad8" strokeWidth="1.200" />
    <circle cx="3.500" cy="3.500" r="2.200" fill="#5a8ad8" />
    <circle cx="3.500" cy="13" r="1.600" fill="#5a8ad8" />
    <circle cx="12" cy="13.500" r="1.700" fill="#5a8ad8" />
    <circle cx="14" cy="3.500" r="1.400" fill="#5a8ad8" />
  </I>
);
const PhysicsTab = () => (
  <I>
    <path d="M10 2.500a6.500 6.500 0 1 0 4 5" stroke="#5a8ad8" strokeWidth="1.200" />
    <circle cx="7.500" cy="8.500" r="2.700" fill="#5a8ad8" />
    <circle cx="13" cy="3" r="1.700" fill="#5a8ad8" />
  </I>
);
const ConstraintTab = () => (
  <I>
    <path d="M2 9c1-3 7-7 10-7s3 3 1 6-6 6-9 6-3-3-2-5z" stroke="#5a8ad8" strokeWidth="1.300" />
    <circle cx="7.500" cy="8" r="3" stroke="#5a8ad8" strokeWidth="1.200" />
    <circle cx="7.500" cy="8" r="1.200" fill="#5a8ad8" />
  </I>
);
const MaterialTab = () => (
  <I>
    <circle cx="8" cy="8" r="7" fill="#b34f5b" />
    <path d="M8 8V1a7 7 0 0 0-7 7zM8 8h7a7 7 0 0 1-7 7z" fill="#c26670" />
    <path d="M1.500 9c2 0 4-1 6.500-1 1 3 4 5 5 5a7 7 0 0 1-11.500-4z" fill="#1d1d1d" opacity=".75" />
  </I>
);

const DeskWindows = () => (
  <I>
    <path d="M5 1h9v8h-3V4H5z" fill="#e0e0e0" />
    <rect x="1" y="6" width="9" height="8" fill="#e0e0e0" />
  </I>
);
const Wifi = () => (
  <I>
    <path d="M1 5c4-3.500 10-3.500 14 0L8 14z" fill="#e0e0e0" />
  </I>
);
const Speaker = () => (
  <I>
    <path d="M1 6h3l4-4v12l-4-4H1z" fill="#e0e0e0" />
    <path d="M10 5c1.500 1.500 1.500 4.500 0 6M12 3.500c2.500 2.500 2.500 6.500 0 9" stroke="#e0e0e0" strokeWidth="1.200" />
  </I>
);
const Battery = () => (
  <I>
    <path d="M3 2.500h3V1h4v1.500h3V15H3z" fill="#e0e0e0" />
    <path d="M8.500 4 5.500 9h2l-.5 3.500L10.500 7h-2z" fill="#1f1d1e" />
  </I>
);

/* ---------- scene ---------- */

const CX = 793;
const CY = 553;
const R = 455;

// face shades walking counter clockwise from +X, 11.25 degrees each
const FACES = [
  "#434344", "#47484a", "#4e4f51", "#565759", "#5f6062", "#696a6c", "#757678", "#808183",
  "#8a8b8d", "#929394", "#99999b", "#9d9d9e", "#a0a0a1", "#a1a1a1", "#9f9f9f", "#9a9a9a",
  "#949595", "#8c8d8d", "#838484", "#7a7b7b", "#6f706f", "#646564", "#575652", "#4a4843",
  "#3d3a35", "#3d3935", "#413c38", "#46413d", "#46413e", "#44403e", "#41403e", "#3f3e3e",
];

const CUT: [number, number][] = [
  [495, 225], [451, 258], [417, 298], [391, 346], [378, 398], [377, 452], [388, 504], [410, 552],
  [441, 590], [480, 622], [519, 646], [564, 658], [605, 663], [648, 661], [687, 650], [723, 633],
  [755, 613], [782, 586], [803, 557], [823, 525], [835, 490], [842, 452], [842, 413],
];
const SCALE = 1920 / 1568;

const vert = (k: number): [number, number] => {
  const a = (k * Math.PI) / 16;
  return [CX + R * Math.cos(a), CY - R * Math.sin(a)];
};

const ConeScene = () => {
  const grid = Array.from({ length: 36 }, (_, i) => i - 18);
  const cut = CUT.map(([x, y]) => [x * SCALE, y * SCALE] as [number, number]);
  const outline = FACES.map((_, k) => vert(k).join(",")).join(" ");
  return (
    <ViewportCanvas width={1584} height={889} viewBox="1 96 1584 889">
      {grid.map((k) => (
        <path key={`v${k}`} d={`M${CX + 45.5 * k} 96V985`} stroke="#474747" strokeWidth="1" />
      ))}
      {grid.map((k) => (
        <path key={`h${k}`} d={`M0 ${CY + 45.5 * k}H1600`} stroke="#474747" strokeWidth="1" />
      ))}
      <path d={`M0 ${CY}H1600`} stroke="#7e3440" strokeWidth="1.500" />
      {FACES.map((c, k) => {
        const [ax, ay] = vert(k);
        const [bx, by] = vert(k + 1);
        return <polygon key={k} points={`${CX},${CY} ${ax},${ay} ${bx},${by}`} fill={c} stroke={c} strokeWidth=".6" />;
      })}
      {FACES.map((_, k) => {
        const [x, y] = vert(k);
        return <line key={k} x1={CX} y1={CY} x2={x} y2={y} stroke="#1c1c1c" strokeOpacity=".5" strokeWidth="1" />;
      })}
      <path d={`M${CX} 96V${CY}`} stroke="#6f6f70" strokeWidth="1.800" />
      <path d={`M${CX} ${CY}V985`} stroke="#4a4a48" strokeWidth="1" />
      <polygon points={outline} fill="none" stroke="#2a2a2a" strokeWidth="1" />
      {FACES.map((_, k) => {
        const [x, y] = vert(k);
        return <circle key={k} cx={x} cy={y} r="2.200" fill="#0d0d0d" />;
      })}
      <circle cx="747" cy="524" r="286.500" fill="none" stroke="#161616" strokeWidth="1" />
      <polyline points={cut.map((p) => p.join(",")).join(" ")} fill="none" stroke="#8a3060" strokeWidth="1.300" />
      <line x1={CX} y1={CY} x2={vert(1)[0]} y2={vert(1)[1]} stroke="#8f8f00" strokeWidth="2" />
      {cut.slice(0, -2).map(([x, y], i) => (
        <rect key={i} x={x - 2.500} y={y - 2.500} width="5" height="5" fill="#e02a1e" />
      ))}
      <rect x={1031 - 4.500} y={505 - 4.500} width="9" height="9" fill="#38c033" />
      <rect x={1031 - 5} y={CY - 5} width="10" height="10" fill="#a8962a" stroke="#e6301e" strokeWidth="1.200" />
      <rect x={1031 - 2.500} y={CY - 2.500} width="5" height="5" fill="#d8281c" />
      <circle cx={CX} cy={CY} r="9.500" fill="none" stroke="#fff" strokeWidth="1.200" />
      <circle cx={CX} cy={CY} r="9.500" fill="none" stroke="#e01818" strokeWidth="1.200" strokeDasharray="4 6" />
      <path d={`M${CX} ${CY - 20}V${CY - 6}M${CX} ${CY + 6}V${CY + 20}M${CX - 20} ${CY}H${CX - 6}M${CX + 6} ${CY}H${CX + 20}`} stroke="#000" strokeWidth="1" />
    </ViewportCanvas>
  );
};

const AxisGizmo = () => (
  <Gizmo width="90" height="90" viewBox="0 0 90 90">
    <path d="M13 45H77" stroke="#c8304a" strokeWidth="2" />
    <path d="M45 13V77" stroke="#6fa81a" strokeWidth="2" />
    <circle cx="13" cy="45" r="7.500" fill="#77424c" stroke="#c8304a" strokeWidth="1.500" />
    <circle cx="45" cy="77" r="7.500" fill="#566a38" stroke="#6fa81a" strokeWidth="1.500" />
  </Gizmo>
);

const frames = Array.from({ length: 25 }, (_, i) => (i + 1) * 10);

const workTabs: [string, number][] = [
  ["Modeling", 63],
  ["Sculpting", 64],
  ["UV Editing", 69.5],
  ["Texture Paint", 80.5],
  ["Shading", 57],
  ["Animation", 69],
  ["Rendering", 67],
  ["Compositing", 80],
  ["Geometry Nodes", 102],
  ["Scripting", 62],
  ["+", 24],
];

const deltaPanels = [
  "Relations",
  "Collections",
  "Instancing",
  "Motion Paths",
  "Visibility",
  "Viewport Display",
  "Line Art",
  "Custom Properties",
];

const fieldBlocks = [
  [["Location X", "0 m"], ["Y", "0 m"], ["Z", "0 m"]],
  [["Rotation X", "0°"], ["Y", "0°"], ["Z", "0°"]],
];
const scaleBlock = [["Scale X", "1.000"], ["Y", "1.000"], ["Z", "1.000"]];

const TransformBlock = ({ rows }: { rows: string[][] }) => (
  <FieldBlock>
    {rows.map(([label, val], i) => (
      <FieldRow key={label}>
        <FieldLabel>{label}</FieldLabel>
        <Value $top={i === 0} $bottom={i === rows.length - 1}>
          {val}
        </Value>
        <LockSlot>
          <LockOpen />
        </LockSlot>
        <Dot />
      </FieldRow>
    ))}
  </FieldBlock>
);

const STATUS =
  "↵/PadEnter/␣: confirm, Esc: cancel, Ctrl Z: undo, LMB: start/define cut, dbl-LMB: close cut, RMB: new cut, Shift/Shift: midpoint snap (OFF), Ctrl/Ctrl: ignore snap (OFF), A: angle constraint 0.00(30.00) (OFF), C: cut through (OFF), MMB: panning, XYZ: orientation lock (OFF), S: distance/angle measurements (OFF), V: x-ray (ON)";

const App = () => (
  <Page>
    <GlobalStyle />
    <DeskBar>
      <DeskLeft>
        <span>Workspaces</span>
        <span>Applications</span>
      </DeskLeft>
      <Clock>Mar 20  6:15 PM</Clock>
      <DeskRight>
        <DeskWindows />
        <Group $ml={35}>
          <Wifi />
        </Group>
        <Group $ml={13}>
          <Speaker />
        </Group>
        <Group $ml={12}>
          <Battery />
        </Group>
        <Group $ml={6}>100 %</Group>
      </DeskRight>
    </DeskBar>
    <TitleBar>
      Blender
      <WindowControls>
        <MinBtn />
        <MaxBtn />
        <CloseBtn>
          <XMark c="#fff" s={9} />
        </CloseBtn>
      </WindowControls>
    </TitleBar>

    <TopMenu>
      <LogoSlot>
        <Logo />
      </LogoSlot>
      <TopItem $w={32}>File</TopItem>
      <TopItem $w={34}>Edit</TopItem>
      <TopItem $w={49}>Render</TopItem>
      <TopItem $w={54}>Window</TopItem>
      <TopItem $w={34}>Help</TopItem>
      <WorkTabs>
        <WorkTab $active $w={52}>
          Layout
        </WorkTab>
        {workTabs.map(([t, w]) => (
          <WorkTab key={t} $w={w}>
            {t}
          </WorkTab>
        ))}
      </WorkTabs>
      <ScenePickers>
        <Picker $w={191}>
          <PickerIcon>
            <SceneIcon />
            <Chev />
          </PickerIcon>
          <PickerName>
            Scene
            <Pin />
          </PickerName>
          <PickerBtn $on>
            <Copy />
          </PickerBtn>
          <PickerBtn>
            <XMark />
          </PickerBtn>
        </Picker>
        <Picker $w={196}>
          <PickerIcon>
            <LayersIcon />
            <Chev />
          </PickerIcon>
          <PickerName>ViewLayer</PickerName>
          <PickerBtn $on>
            <Copy />
          </PickerBtn>
          <PickerBtn $w={25}>
            <XMark />
          </PickerBtn>
        </Picker>
      </ScenePickers>
    </TopMenu>

    <Workspace>
      <LeftCol>
        <Viewport>
          <ConeScene />
          <Header>
            <Drop $w={32}>
              <ViewIcon />
              <Chev />
            </Drop>
            <Drop $w={108} $ml={6}>
              <ModeIcon />
              <span>Edit Mode</span>
              <Push>
                <Chev />
              </Push>
            </Drop>
            <Segments $ml={7}>
              <Seg $w={19} $on>
                <VertMode />
              </Seg>
              <Seg $w={19}>
                <EdgeMode />
              </Seg>
              <Seg $w={19}>
                <FaceMode />
              </Seg>
            </Segments>
            <Menu $ml={13}>View</Menu>
            <Menu $ml={13}>Select</Menu>
            <Menu $ml={14}>Add</Menu>
            <Menu $ml={13}>Mesh</Menu>
            <Menu $ml={14}>Vertex</Menu>
            <Menu $ml={13}>Edge</Menu>
            <Menu $ml={14}>Face</Menu>
            <Menu $ml={14}>UV</Menu>
            <Drop $w={78} $ml={139}>
              <GlobalIcon />
              <span>Global</span>
              <Push>
                <Chev />
              </Push>
            </Drop>
            <Drop $w={32} $ml={6}>
              <PivotIcon />
              <Chev />
            </Drop>
            <Segments $ml={6}>
              <Seg $w={19}>
                <MagnetIcon />
              </Seg>
              <Seg $w={31} $dim>
                <SnapIcon />
                <Chev />
              </Seg>
            </Segments>
            <Segments $ml={7}>
              <Seg $w={19}>
                <PropIcon />
              </Seg>
              <Seg $w={31} $dim>
                <FalloffIcon />
                <Chev c="#777" />
              </Seg>
            </Segments>
            <Push>
              <Drop $w={31}>
                <EyeArrow />
                <Chev />
              </Drop>
              <Segments $ml={7}>
                <Seg $w={18} $on>
                  <GizmoIcon />
                </Seg>
                <Seg $w={20} $dim>
                  <Chev />
                </Seg>
              </Segments>
              <Segments $ml={5}>
                <Seg $w={18} $on>
                  <OverlayIcon />
                </Seg>
                <Seg $w={20} $dim>
                  <Chev />
                </Seg>
              </Segments>
              <Segments $ml={4}>
                <Seg $w={19}>
                  <XrayIcon />
                </Seg>
              </Segments>
              <Segments $ml={5}>
                <Seg $w={19}>
                  <ShadeWire />
                </Seg>
                <Seg $w={19} $on>
                  <ShadeSolid />
                </Seg>
                <Seg $w={19}>
                  <ShadeMat />
                </Seg>
                <Seg $w={19}>
                  <ShadeRender />
                </Seg>
                <Seg $w={20}>
                  <Chev />
                </Seg>
              </Segments>
              <Group $w={6} />
            </Push>
          </Header>
          <ToolSettings>
            <Check $on $ml={44}>
              <Chk />
            </Check>
            <CheckLabel>Occlude Geometry</CheckLabel>
            <Check $ml={21}>{null}</Check>
            <CheckLabel>Only Selected</CheckLabel>
            <Check $on $ml={20}>
              <Chk />
            </Check>
            <CheckLabel>X-Ray</CheckLabel>
            <Drop $w={33} $ml={21}>
              <Group $ml={3}>...</Group>
              <Push>
                <Chev />
              </Push>
            </Drop>
            <Menu $ml={13}>Drag:</Menu>
            <Drop $w={73} $ml={10}>
              <span>Select Box</span>
              <Push>
                <Chev />
              </Push>
            </Drop>
            <Push>
              <MirrorIcon />
              <Segments $ml={2}>
                <Seg $w={16}>X</Seg>
                <Seg $w={16}>Y</Seg>
                <Seg $w={16}>Z</Seg>
              </Segments>
              <Segments $ml={5}>
                <Seg $w={18}>
                  <AutoMergeIcon />
                </Seg>
              </Segments>
              <Drop $w={62} $ml={7}>
                <Group $ml={3}>Options</Group>
                <Push>
                  <Chev />
                </Push>
              </Drop>
              <Group $w={6} />
            </Push>
          </ToolSettings>
          <InfoText>
            Top Orthographic
            <br />
            (1) Cone
            <br />
            10 Centimeters
          </InfoText>
          <Toolbar>
            {toolGroups.map((g, i) => (
              <ToolGroup key={i}>
                {g.map((t) => (
                  <ToolBtn key={t.id} $on={t.on} $more={t.more}>
                    <I s={24} v={24}>
                      {toolIcons[t.id]}
                    </I>
                  </ToolBtn>
                ))}
              </ToolGroup>
            ))}
          </Toolbar>
          <AxisGizmo />
          <GizmoBall $x={1534} $y={69} $c="#6fa81a" $ink="#2c4408">Y</GizmoBall>
          <GizmoBall $x={1566} $y={101} $c="#c8304a" $ink="#4f0f1c">X</GizmoBall>
          <GizmoBall $x={1534} $y={101} $c="#2a90ff" $ink="#103c70">Z</GizmoBall>
          <NavColumn>
            <NavBtn>
              <I s={18}>
                <circle cx="10" cy="6" r="5" fill="#eee" />
                <path d="M10 3.500v5M7.500 6h5" stroke="#222" />
                <path d="M6.500 9.500 1.500 14.500" stroke="#eee" strokeWidth="2" />
              </I>
            </NavBtn>
            <NavBtn>
              <I s={18}>
                <path d="M2 9l2-1 2 2V3h1.300v5L8 2h1.300l.2 6L11 3h1.300l-.3 6 1.500-3H15l-1.500 6c-.5 2-2 3-4 3-3 0-4-1-5-3z" fill="#eee" />
              </I>
            </NavBtn>
            <NavBtn>
              <I s={18}>
                <circle cx="5" cy="4.500" r="2.500" fill="#eee" />
                <circle cx="11" cy="4.500" r="2.500" fill="#eee" />
                <rect x="3" y="7.500" width="10" height="6" fill="#eee" />
                <path d="M13 10l3-2v5z" fill="#eee" />
              </I>
            </NavBtn>
            <NavBtn>
              <I s={16}>
                <path d="M1.500 1.500h13v13h-13zM1.500 5.800h13M1.500 10.200h13M5.800 1.500v13M10.200 1.500v13" stroke="#eee" strokeWidth="1" />
              </I>
            </NavBtn>
          </NavColumn>
          <EdgeTab $top={60}>
            <Chev dir="left" c="#aaa" />
          </EdgeTab>
        </Viewport>

        <Timeline>
          <TimeHeader>
            <Drop $w={31}>
              <TimelineIcon />
              <Chev />
            </Drop>
            <Segments $ml={6}>
              <Seg $w={69} $dim>
                Playback&nbsp;
                <Chev />
              </Seg>
              <Seg $w={59} $dim>
                Keying&nbsp;
                <Chev />
              </Seg>
            </Segments>
            <Menu $ml={8}>View</Menu>
            <Menu $ml={13}>Marker</Menu>
            <Segments $ml={443}>
              <Seg $w={19}>
                <I s={10} v={10}>
                  <circle cx="5" cy="5" r="4" fill="#e8e8e8" />
                </I>
              </Seg>
              <Seg $w={19} $dim>
                <Chev c="#666" />
              </Seg>
            </Segments>
            <Segments $ml={5}>
              <Seg $w={20}>
                <Play d="M3 2h1.500v10H3zM11 2v10L5 7z" />
              </Seg>
              <Seg $w={20}>
                <Play d="M4 7l3-4 0 8zM9 3v8l3-4zM0 7l3-3v6zM10 7l3-3v6z" />
              </Seg>
              <Seg $w={20}>
                <Play d="M11 1v12L2 7z" />
              </Seg>
              <Seg $w={20}>
                <Play d="M3 1v12l9-6z" />
              </Seg>
              <Seg $w={20}>
                <Play d="M1 3v8l3-4zM7 3l3 4-3 4-3-4zM10 3v8l3-4z" />
              </Seg>
              <Seg $w={20}>
                <Play d="M3 2v10l6-5zM9.500 2H11v10H9.500z" />
              </Seg>
            </Segments>
            <Push>
              <NumField $w={74}>1</NumField>
              <Segments $ml={6}>
                <Seg $w={19}>
                  <TimerIcon />
                </Seg>
                <RangeSeg $w={88}>
                  <span>Start</span>
                  <span>1</span>
                </RangeSeg>
                <RangeSeg $w={84}>
                  <span>End</span>
                  <span>250</span>
                </RangeSeg>
              </Segments>
              <Group $w={6} />
            </Push>
          </TimeHeader>
          <Ruler>
            {frames.map((f) => (
              <FrameNo key={f} style={{ left: 57 + (f - 1) * 5.9 }}>
                {f}
              </FrameNo>
            ))}
            <Playhead>1</Playhead>
          </Ruler>
          <Tracks>
            <TickLayer $color="#262626" $offset={80.6} $step={59} />
            <TickLayer $color="#151515" $offset={51.1} $step={59} />
            <ScrollBar>
              <ScrollEnd />
              <ScrollEnd />
            </ScrollBar>
          </Tracks>
          <PlayLine />
          <EdgeTab $top={36}>
            <Chev dir="left" c="#aaa" />
          </EdgeTab>
          <EdgeTab $top={36} $left>
            <Chev dir="right" c="#aaa" />
          </EdgeTab>
        </Timeline>
      </LeftCol>

      <RightCol>
        <Outliner>
          <Header>
            <Drop $w={32}>
              <ListIcon />
              <Chev />
            </Drop>
            <Drop $w={31} $ml={5}>
              <LayersIcon />
              <Chev />
            </Drop>
            <SearchBox $w={110} $ml={23}>
              <Search />
            </SearchBox>
            <Push>
              <Drop $w={31}>
                <FilterIcon />
                <Chev />
              </Drop>
              <Segments $ml={6}>
                <Seg $w={20}>
                  <NewColl />
                </Seg>
              </Segments>
              <Group $w={8} />
            </Push>
          </Header>
          <Rows>
            <Row $pad={23} $alt>
              <CollIcon />
              <Group $ml={3}>Scene Collection</Group>
            </Row>
            <Row $pad={25}>
              <TriDown />
              <Group $ml={3}>
                <IconChip $tone="plain">
                  <CollIcon />
                </IconChip>
              </Group>
              <Group $ml={1}>Collection</Group>
              <RowEnd>
                <I s={13}>
                  <rect x="1" y="1" width="14" height="14" rx="2" fill="#e8e8e8" />
                  <path d="M4 8l3 3 5-6" stroke="#222" strokeWidth="2" />
                </I>
                <Eye />
                <Cam />
              </RowEnd>
            </Row>
            <Row $pad={46} $alt>
              <Tri />
              <Group $ml={5}>
                <CurveIcon />
              </Group>
              <Group $ml={3}>BezierCircle</Group>
              <Group $ml={17}>
                <CurveData />
              </Group>
              <RowEnd>
                <Eye />
                <Cam />
              </RowEnd>
            </Row>
            <Row $pad={46} $sel>
              <ModeMark>
                <ModeIcon />
              </ModeMark>
              <Tri />
              <Group $ml={3}>
                <IconChip $tone="sel">
                  <ConeIcon />
                </IconChip>
              </Group>
              <RowName $orange>Cone</RowName>
              <Group $ml={15}>
                <IconChip $tone="teal">
                  <MeshData />
                </IconChip>
              </Group>
              <RowEnd>
                <Eye />
                <Cam />
              </RowEnd>
            </Row>
          </Rows>
        </Outliner>

        <Properties>
          <Header>
            <Drop $w={32}>
              <PropsEditorIcon />
              <Chev />
            </Drop>
            <SearchBox $w={108} $ml={73}>
              <Search />
            </SearchBox>
            <Push>
              <Drop $w={19}>
                <Chev />
              </Drop>
              <Group $w={6} />
            </Push>
          </Header>
          <PropBody>
            <TabColumn>
              <TabItem>
                <ToolTab />
              </TabItem>
              <TabSep $m={3} />
              <TabItem>
                <RenderTab />
              </TabItem>
              <TabItem>
                <OutputTab />
              </TabItem>
              <TabItem>
                <LayersIcon />
              </TabItem>
              <TabItem>
                <SceneIcon />
              </TabItem>
              <TabItem>
                <WorldTab />
              </TabItem>
              <TabSep $m={5} />
              <TabItem>
                <CollTab />
              </TabItem>
              <TabSep $m={3} />
              <TabItem $on>
                <ObjIcon fill="#e8a465" edge="#c58a52" />
              </TabItem>
              <TabItem>
                <Wrench />
              </TabItem>
              <TabItem>
                <ParticleTab />
              </TabItem>
              <TabItem>
                <PhysicsTab />
              </TabItem>
              <TabItem>
                <ConstraintTab />
              </TabItem>
              <TabItem>
                <MeshData s={16} />
              </TabItem>
              <TabItem>
                <MaterialTab />
              </TabItem>
              <TabSep $m={0} />
            </TabColumn>
            <Context>
              <ContextRow>
                <ObjIcon />
                <span>Cone</span>
                <PinSlot>
                  <Pin c="#a0a0a0" />
                </PinSlot>
              </ContextRow>
              <NameField>
                <NameIcon>
                  <ObjIcon />
                  <Chev />
                </NameIcon>
                <NameText>Cone</NameText>
              </NameField>
              <Panel>
                <PanelHead>
                  <Chev />
                  <span>Transform</span>
                  <Grip>
                    <GripDots />
                  </Grip>
                </PanelHead>
                <FieldStack>
                  {fieldBlocks.map((rows, i) => (
                    <TransformBlock key={i} rows={rows} />
                  ))}
                  <FieldRow $h={18}>
                    <FieldLabel>Mode</FieldLabel>
                    <Select>
                      XYZ Euler
                      <Chev />
                    </Select>
                    <span />
                    <Dot />
                  </FieldRow>
                  <TransformBlock rows={scaleBlock} />
                </FieldStack>
                <DeltaRow>
                  <Chev dir="right" />
                  <span>Delta Transform</span>
                </DeltaRow>
              </Panel>
              {deltaPanels.map((p) => (
                <Panel key={p}>
                  <PanelHead>
                    <Chev dir="right" />
                    <span>{p}</span>
                    <Grip>
                      <GripDots />
                    </Grip>
                  </PanelHead>
                </Panel>
              ))}
            </Context>
          </PropBody>
        </Properties>
      </RightCol>
    </Workspace>

    <StatusBar>
      <span>{STATUS}</span>
      <span>3.4.1</span>
    </StatusBar>
  </Page>
);

export default App;
